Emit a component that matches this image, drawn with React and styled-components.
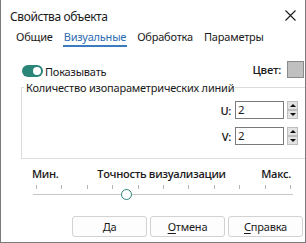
import React from 'react';
import styled, { createGlobalStyle } from 'styled-components';

const GlobalStyle = createGlobalStyle`
    html, body {
        margin: 0;
        padding: 0;
        background: #ffffff;
    }
    * {
        box-sizing: border-box;
    }
`;

const tabs = ['Общие', 'Визуальные', 'Обработка', 'Параметры'];
const ticks = Array.from({ length: 11 });
const precision = 0.357;

function App() {
    return (
        <>
            <GlobalStyle />
            <Window>
                <TitleBar>
                    <Title>Свойства объекта</Title>
                    <Close>
                        <svg width="11" height="11" viewBox="0 0 11 11">
                            <path d="M0.5 0.5 L10.5 10.5 M10.5 0.5 L0.5 10.5" stroke="#1a1a1a" strokeWidth="1.1" fill="none" />
                        </svg>
                    </Close>
                </TitleBar>
                <Tabs>
                    {tabs.map((t, i) => (
                        <Tab key={t} $active={i === 1}>{t}</Tab>
                    ))}
                </Tabs>
                <TopRow>
                    <ToggleLabel>
                        <Toggle><Knob /></Toggle>
                        Показывать
                    </ToggleLabel>
                    <ColorPick>
                        <Label>Цвет:</Label>
                        <Swatch />
                    </ColorPick>
                </TopRow>
                <Group>
                    <Legend>Количество изопараметрических линий</Legend>
                    <Field>
                        <Label>U:</Label>
                        <Input>2</Input>
                        <Spinner>
                            <SpinButton><Arrow $up /></SpinButton>
                            <SpinButton><Arrow /></SpinButton>
                        </Spinner>
                    </Field>
                    <Field>
                        <Label>V:</Label>
                        <Input>2</Input>
                        <Spinner>
                            <SpinButton><Arrow $up /></SpinButton>
                            <SpinButton><Arrow /></SpinButton>
                        </Spinner>
                    </Field>
                </Group>
                <Slider>
                    <SliderLabels>
                        <Label>Мин.</Label>
                        <Label>Точность визуализации</Label>
                        <Label $right>Макс.</Label>
                    </SliderLabels>
                    <Ticks>
                        {ticks.map((_, i) => <Tick key={i} />)}
                    </Ticks>
                    <Track>
                        <Thumb style={{ left: `${precision * 100}%` }} />
                    </Track>
                </Slider>
                <Buttons>
                    <Button>Да</Button>
                    <Button><u>О</u>тмена</Button>
                    <Button><u>С</u>правка</Button>
                </Buttons>
            </Window>
        </>
    );
}

export default App;

const Window = styled.div`
    width: 306px;
    height: 243px;
    background: #ffffff;
    border: 1px solid #7a7a7a;
    border-top: none;
    display: flex;
    flex-direction: column;
    overflow: hidden;
    font-family: "Noto Sans", "Open Sans", sans-serif;
    font-size: 11px;
    letter-spacing: -0.2px;
    color: #1a1a1a;
`;
const TitleBar = styled.div`
    height: 30px;
    display: flex;
    align-items: center;
    justify-content: space-between;
    padding: 0 9px 0 9px;
`;
const Title = styled.div`
    font-size: 12px;
    letter-spacing: -0.4px;
    margin-top: 2px;
`;
const Close = styled.div`
    display: flex;
    margin-top: 1px;
`;
const Tabs = styled.div`
    display: flex;
    gap: 9px;
    padding-left: 14px;
    height: 17px;
`;
const Tab = styled.div`
    line-height: 14px;
    color: ${p => (p.$active ? '#2d6bb3' : '#1a1a1a')};
    border-bottom: 2px solid ${p => (p.$active ? '#3a7cc0' : 'transparent')};
    padding: 0 1px;
`;
const TopRow = styled.div`
    display: flex;
    justify-content: space-between;
    align-items: center;
    padding: 0 1px 0 21px;
    margin-top: 13px;
    height: 18px;
`;
const ToggleLabel = styled.div`
    display: flex;
    align-items: center;
    gap: 2px;
    margin-top: 4px;
`;
const Toggle = styled.div`
    width: 21px;
    height: 12px;
    border-radius: 6px;
    background: #2a8678;
    display: flex;
    align-items: center;
    justify-content: flex-end;
    padding-right: 2px;
`;
const Knob = styled.div`
    width: 8px;
    height: 8px;
    border-radius: 50%;
    background: #ffffff;
`;
const ColorPick = styled.div`
    display: flex;
    align-items: center;
    gap: 6px;
`;
const Label = styled.span`
    font-family: "Open Sans", "Noto Sans", sans-serif;
    font-weight: 600;
    letter-spacing: -0.3px;
    color: #1a1a1a;
    text-align: ${p => (p.$right ? 'right' : 'left')};
`;
const Swatch = styled.div`
    width: 17px;
    height: 17px;
    background: #c0c0c0;
    border: 1px solid #8a8a8a;
`;
const Group = styled.fieldset`
    margin: 2px -2px 0 20px;
    padding: 6px 9px 13px 0;
    border: 1px solid #dcdcdc;
    border-right: none;
    display: flex;
    flex-direction: column;
    align-items: flex-end;
    gap: 8px;
`;
const Legend = styled.legend`
    padding: 0 1px 0 2px;
    margin-left: 2px;
`;
const Field = styled.div`
    display: flex;
    align-items: center;
`;
const Input = styled.div`
    width: 49px;
    height: 18px;
    margin-left: 4px;
    border: 1px solid #7a7a7a;
    font-size: 11.5px;
    line-height: 16px;
    padding-left: 2px;
`;
const Spinner = styled.div`
    display: flex;
    flex-direction: column;
    margin-left: 3px;
`;
const SpinButton = styled.div`
    width: 11px;
    height: 9px;
    background: #e3e3e3;
    border: 1px solid #bdbdbd;
    display: flex;
    align-items: center;
    justify-content: center;
`;
const Arrow = styled.div`
    width: 0;
    height: 0;
    border-left: 3px solid transparent;
    border-right: 3px solid transparent;
    ${p => (p.$up ? 'border-bottom: 3px solid #111;' : 'border-top: 3px solid #111;')}
`;
const Slider = styled.div`
    padding: 0 12px 0 32px;
    margin-top: 4px;
`;
const SliderLabels = styled.div`
    display: grid;
    grid-template-columns: 1fr auto 1fr;
    align-items: end;
    margin: 0 2px 0 -1px;
    height: 18px;
`;
const Ticks = styled.div`
    display: flex;
    justify-content: space-between;
    padding: 0 2px 0 3px;
    margin-top: 4px;
`;
const Tick = styled.div`
    width: 1px;
    height: 4px;
    background: #b4b4b4;
`;
const Track = styled.div`
    position: relative;
    height: 1px;
    background: #c6c6c6;
    margin-top: 5px;
`;
const Thumb = styled.div`
    position: absolute;
    top: -5px;
    width: 11px;
    height: 11px;
    margin-left: -5px;
    border-radius: 50%;
    background: #ffffff;
    border: 1.5px solid #2a8678;
`;
const Buttons = styled.div`
    display: flex;
    justify-content: flex-end;
    gap: 3px;
    padding-right: 2px;
    margin-top: 21px;
`;
const Button = styled.div`
    width: 75px;
    height: 21px;
    border: 1px solid #d2d2d2;
    border-radius: 3px;
    background: #fdfdfd;
    display: flex;
    align-items: center;
    justify-content: center;
    & u {
        text-decoration-thickness: 1px;
        text-underline-offset: 2px;
    }
`;
